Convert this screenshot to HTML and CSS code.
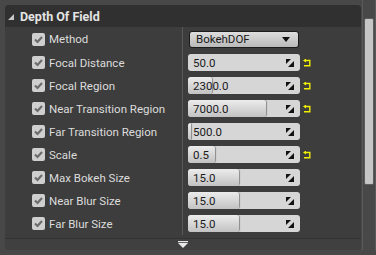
FILE: index.html
```html
<!DOCTYPE html>
<html lang="en">
<head>
    <meta charset="UTF-8">
    <title>Depth Of Field</title>
    <link rel="stylesheet" href="styles.css">
</head>
<body>
    <div class="window">
        <div class="panel">
            <div class="panel-header">
                <svg class="caret" width="6" height="6" viewBox="0 0 6 6"><polygon points="6,0 6,6 0,6" fill="#c8c8c8"/></svg>
                <span>Depth Of Field</span>
            </div>
            <div class="rows">
                <div class="row row-tall">
                    <div class="name"><span class="check"><svg width="13" height="13" viewBox="0 0 13 13"><path d="M3 6.5 L5.5 9 L10 4" fill="none" stroke="#6c6c6c" stroke-width="2.2"/></svg></span>Method</div>
                    <div class="value">
                        <div class="combo">BokehDOF<svg width="8" height="5" viewBox="0 0 8 5"><polygon points="0,0 8,0 4,5" fill="#111"/></svg></div>
                    </div>
                </div>
                <div class="row">
                    <div class="name"><span class="check"><svg width="13" height="13" viewBox="0 0 13 13"><path d="M3 6.5 L5.5 9 L10 4" fill="none" stroke="#6c6c6c" stroke-width="2.2"/></svg></span>Focal Distance</div>
                    <div class="value">
                        <div class="num"><span class="txt">50.0</span><svg class="spin" width="8" height="8" viewBox="0 0 8 8"><polygon points="0,0 5,0 0,5" fill="#111"/><polygon points="8,2 8,8 2,8" fill="#111"/></svg></div>
                        <svg class="reset" width="8" height="8" viewBox="0 0 8 8"><path d="M2 1.5 H6.8 V6.8 H1" fill="none" stroke="#f0f000" stroke-width="1.4"/><polygon points="0,1.5 3,-0.5 3,3.5" fill="#f0f000"/></svg>
                    </div>
                </div>
                <div class="row">
                    <div class="name"><span class="check"><svg width="13" height="13" viewBox="0 0 13 13"><path d="M3 6.5 L5.5 9 L10 4" fill="none" stroke="#6c6c6c" stroke-width="2.2"/></svg></span>Focal Region</div>
                    <div class="value">
                        <div class="num"><span class="fill" style="width: 24px"></span><span class="txt">2300.0</span><svg class="spin" width="8" height="8" viewBox="0 0 8 8"><polygon points="0,0 5,0 0,5" fill="#111"/><polygon points="8,2 8,8 2,8" fill="#111"/></svg></div>
                        <svg class="reset" width="8" height="8" viewBox="0 0 8 8"><path d="M2 1.5 H6.8 V6.8 H1" fill="none" stroke="#f0f000" stroke-width="1.4"/><polygon points="0,1.5 3,-0.5 3,3.5" fill="#f0f000"/></svg>
                    </div>
                </div>
                <div class="row">
                    <div class="name"><span class="check"><svg width="13" height="13" viewBox="0 0 13 13"><path d="M3 6.5 L5.5 9 L10 4" fill="none" stroke="#6c6c6c" stroke-width="2.2"/></svg></span>Near Transition Region</div>
                    <div class="value">
                        <div class="num"><span class="fill" style="width: 78px"></span><span class="txt">7000.0</span><svg class="spin" width="8" height="8" viewBox="0 0 8 8"><polygon points="0,0 5,0 0,5" fill="#111"/><polygon points="8,2 8,8 2,8" fill="#111"/></svg></div>
                        <svg class="reset" width="8" height="8" viewBox="0 0 8 8"><path d="M2 1.5 H6.8 V6.8 H1" fill="none" stroke="#f0f000" stroke-width="1.4"/><polygon points="0,1.5 3,-0.5 3,3.5" fill="#f0f000"/></svg>
                    </div>
                </div>
                <div class="row">
                    <div class="name"><span class="check"><svg width="13" height="13" viewBox="0 0 13 13"><path d="M3 6.5 L5.5 9 L10 4" fill="none" stroke="#6c6c6c" stroke-width="2.2"/></svg></span>Far Transition Region</div>
                    <div class="value">
                        <div class="num"><span class="fill" style="width: 3px"></span><span class="txt">500.0</span><svg class="spin" width="8" height="8" viewBox="0 0 8 8"><polygon points="0,0 5,0 0,5" fill="#111"/><polygon points="8,2 8,8 2,8" fill="#111"/></svg></div>
                    </div>
                </div>
                <div class="row">
                    <div class="name"><span class="check"><svg width="13" height="13" viewBox="0 0 13 13"><path d="M3 6.5 L5.5 9 L10 4" fill="none" stroke="#6c6c6c" stroke-width="2.2"/></svg></span>Scale</div>
                    <div class="value">
                        <div class="num"><span class="fill" style="width: 27px"></span><span class="txt">0.5</span><svg class="spin" width="8" height="8" viewBox="0 0 8 8"><polygon points="0,0 5,0 0,5" fill="#111"/><polygon points="8,2 8,8 2,8" fill="#111"/></svg></div>
                        <svg class="reset" width="8" height="8" viewBox="0 0 8 8"><path d="M2 1.5 H6.8 V6.8 H1" fill="none" stroke="#f0f000" stroke-width="1.4"/><polygon points="0,1.5 3,-0.5 3,3.5" fill="#f0f000"/></svg>
                    </div>
                </div>
                <div class="row">
                    <div class="name"><span class="check"><svg width="13" height="13" viewBox="0 0 13 13"><path d="M3 6.5 L5.5 9 L10 4" fill="none" stroke="#6c6c6c" stroke-width="2.2"/></svg></span>Max Bokeh Size</div>
                    <div class="value">
                        <div class="num"><span class="fill" style="width: 51px"></span><span class="txt">15.0</span><svg class="spin" width="8" height="8" viewBox="0 0 8 8"><polygon points="0,0 5,0 0,5" fill="#111"/><polygon points="8,2 8,8 2,8" fill="#111"/></svg></div>
                    </div>
                </div>
                <div class="row">
                    <div class="name"><span class="check"><svg width="13" height="13" viewBox="0 0 13 13"><path d="M3 6.5 L5.5 9 L10 4" fill="none" stroke="#6c6c6c" stroke-width="2.2"/></svg></span>Near Blur Size</div>
                    <div class="value">
                        <div class="num"><span class="fill" style="width: 51px"></span><span class="txt">15.0</span><svg class="spin" width="8" height="8" viewBox="0 0 8 8"><polygon points="0,0 5,0 0,5" fill="#111"/><polygon points="8,2 8,8 2,8" fill="#111"/></svg></div>
                    </div>
                </div>
                <div class="row">
                    <div class="name"><span class="check"><svg width="13" height="13" viewBox="0 0 13 13"><path d="M3 6.5 L5.5 9 L10 4" fill="none" stroke="#6c6c6c" stroke-width="2.2"/></svg></span>Far Blur Size</div>
                    <div class="value">
                        <div class="num"><span class="fill" style="width: 51px"></span><span class="txt">15.0</span><svg class="spin" width="8" height="8" viewBox="0 0 8 8"><polygon points="0,0 5,0 0,5" fill="#111"/><polygon points="8,2 8,8 2,8" fill="#111"/></svg></div>
                    </div>
                </div>
            </div>
            <div class="panel-footer">
                <svg width="10" height="7" viewBox="0 0 10 7"><rect x="0" y="0" width="10" height="1.2" fill="#e8e8e8"/><polygon points="0,2 10,2 5,7" fill="#e8e8e8"/></svg>
            </div>
        </div>
        <div class="scrollbar"><div class="thumb"></div></div>
    </div>
</body>
</html>
```

FILE: styles.css
```css
* {
    margin: 0;
    padding: 0;
    box-sizing: border-box;
}
body {
    background: #484848;
    font-family: Roboto, "Liberation Sans", sans-serif;
    font-size: 11.5px;
    width: 376px;
    height: 255px;
    overflow: hidden;
}
.window {
    display: flex;
    padding: 5px 0 0 5px;
}
.panel {
    width: 356px;
    height: 245px;
    background: #3d3d3d;
    border-radius: 4px;
    overflow: hidden;
    display: flex;
    flex-direction: column;
}
.panel-header {
    height: 22px;
    background: #303030;
    display: flex;
    align-items: center;
    padding-left: 3px;
    color: #e4e4e4;
    font-weight: bold;
    font-size: 12.5px;
}
.caret {
    margin: 1px 6px 0 0;
}
.rows {
    height: 211px;
}
.row {
    display: flex;
    height: 23px;
}
.row-tall {
    height: 24px;
}
.name {
    width: 178px;
    border-right: 1px solid #595959;
    display: flex;
    align-items: center;
    padding-left: 27px;
    color: #dcdcdc;
}
.check {
    width: 13px;
    height: 13px;
    background: #cfcfcf;
    border-radius: 2px;
    margin-right: 4px;
    display: flex;
}
.value {
    display: flex;
    align-items: center;
    padding-left: 5px;
}
.combo {
    width: 110px;
    height: 17px;
    margin-left: 1px;
    border: 1px solid #1c1c1c;
    border-radius: 3px;
    background: linear-gradient(#dedede, #b9b9b9);
    color: #1a1a1a;
    display: flex;
    align-items: center;
    justify-content: space-between;
    padding: 0 8px 0 6px;
}
.num {
    position: relative;
    width: 112px;
    height: 17px;
    background: #d6d6d6;
    border-radius: 3px;
    display: flex;
    align-items: center;
    justify-content: space-between;
    padding: 0 6px 0 5px;
    color: #1a1a1a;
    overflow: hidden;
}
.fill {
    position: absolute;
    left: 0;
    top: 0;
    bottom: 0;
    border-radius: 3px;
    background: linear-gradient(#ececec, #c2c2c2);
    box-shadow: 1px 0 1px #8a8a8a;
}
.txt, .spin {
    position: relative;
}
.reset {
    margin-left: 3px;
}
.panel-footer {
    flex: 1;
    border-top: 1px solid #333;
    background: #404040;
    display: flex;
    justify-content: flex-end;
    align-items: center;
    padding-right: 173px;
}
.scrollbar {
    width: 14px;
    height: 250px;
    margin: -5px 0 0 1px;
    border-left: 1px solid #5a5a5a;
    border-right: 1px solid #5a5a5a;
    padding: 18px 1px 0;
}
.thumb {
    height: 167px;
    background: #c6c6c6;
    border: 1px solid #5e5e5e;
    border-radius: 2px;
}
```
